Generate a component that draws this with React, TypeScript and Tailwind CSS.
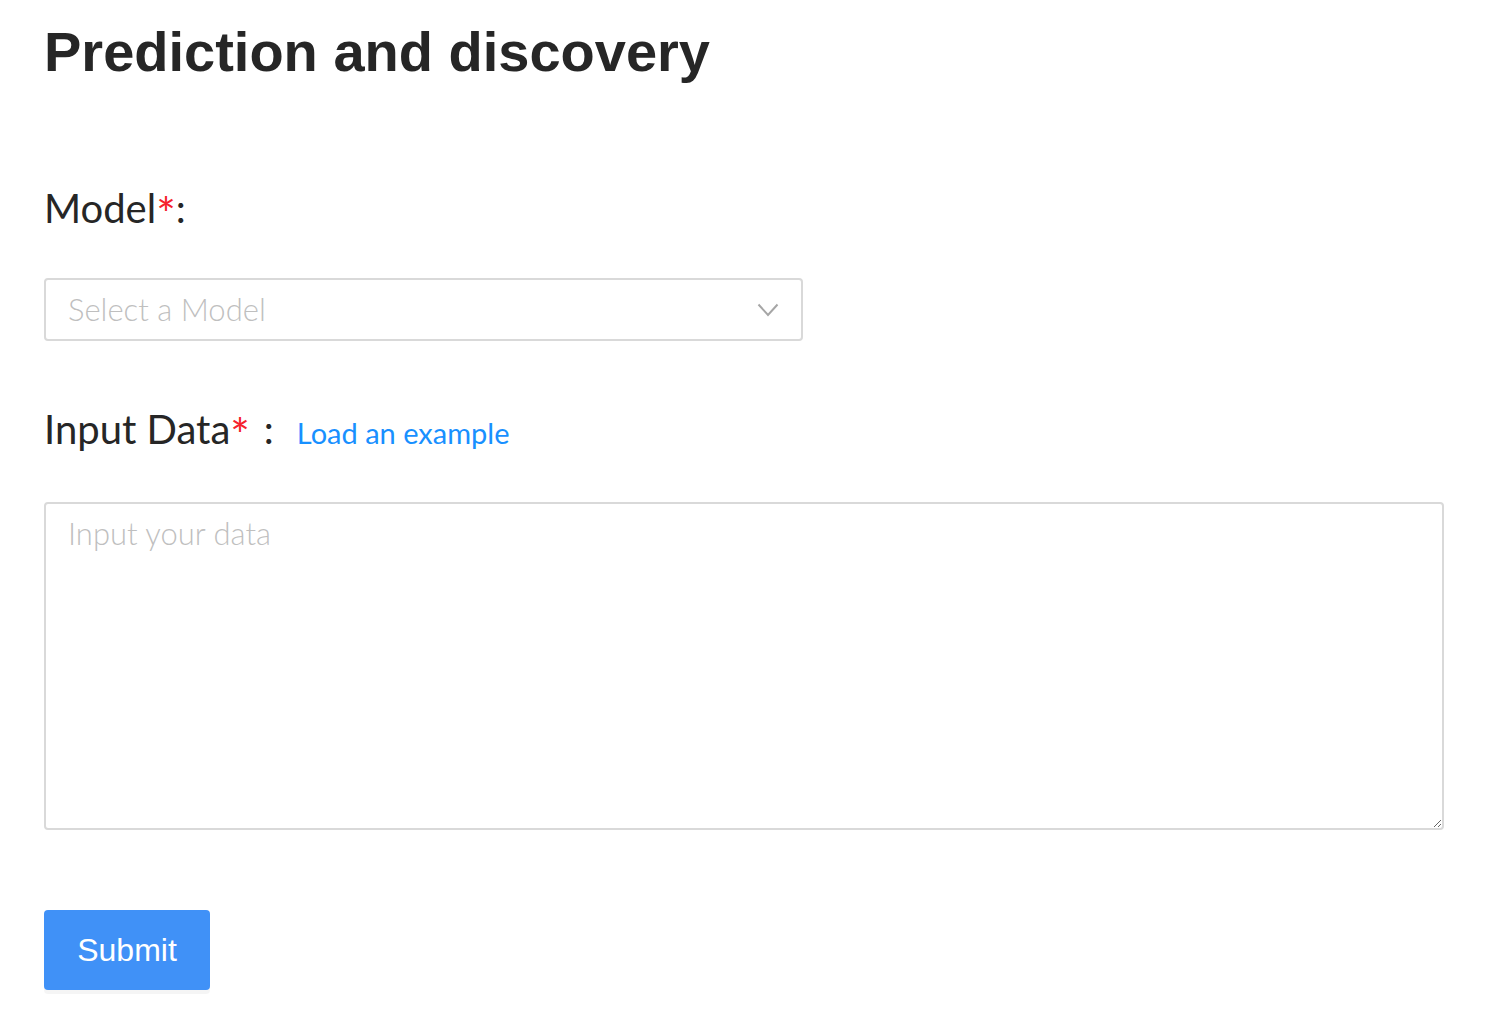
import React from "react";

export default function App() {
  return (
    <div className="min-h-[1030px] w-[1500px] bg-white pl-[44px] pr-[56px] pt-[24px]">
      <h1
        className="text-[56px] leading-[56px] font-bold text-[#262626]"
        style={{ fontFamily: '"Liberation Sans", Arial, sans-serif' }}
      >
        Prediction and discovery
      </h1>

      <div className="mt-[104px] h-[48px] font-['Lato',sans-serif] text-[40px] leading-[48px] text-[#262626]">
        Model<span className="align-[-8px] text-[46px] leading-[0] text-[#f5222d]">*</span>:
      </div>

      <div className="mt-[46px] flex h-[63px] w-[759px] items-center justify-between rounded-[4px] border-2 border-[#d9d9d9] bg-white pl-[22px] pr-[22px]">
        <span className="font-['Lato',sans-serif] text-[31px] font-light text-[#bfbfbf]">Select a Model</span>
        <svg width="22" height="14" viewBox="0 0 22 14" fill="none">
          <path d="M1.5 1.5 L11 12 L20.5 1.5" stroke="#a6a6a6" strokeWidth="2" />
        </svg>
      </div>

      <div className="mt-[64px] flex h-[48px] items-baseline font-['Lato',sans-serif] text-[#262626]">
        <span className="text-[40px] leading-[48px]">
          Input Data<span className="align-[-8px] text-[46px] leading-[0] text-[#f5222d]">*</span>
        </span>
        <span className="ml-[14px] text-[40px] leading-[48px]">:</span>
        <span className="ml-[23px] text-[29px] leading-[48px] text-[#1890ff]">Load an example</span>
      </div>

      <textarea
        placeholder="Input your data"
        className="mt-[49px] block h-[328px] w-[1400px] resize-y rounded-[4px] border-2 border-[#d9d9d9] bg-white px-[22px] py-[6px] font-['Lato',sans-serif] text-[31px] font-light text-[#262626] placeholder:text-[#bfbfbf] outline-none"
      />

      <button
        className="mt-[80px] flex h-[80px] w-[166px] items-center justify-center rounded-[4px] bg-[#4091f7] text-[32px] text-white shadow-[0_4px_0_rgba(0,0,0,0.04)]"
        style={{ fontFamily: '"Liberation Sans", Arial, sans-serif' }}
      >
        Submit
      </button>
    </div>
  );
}
